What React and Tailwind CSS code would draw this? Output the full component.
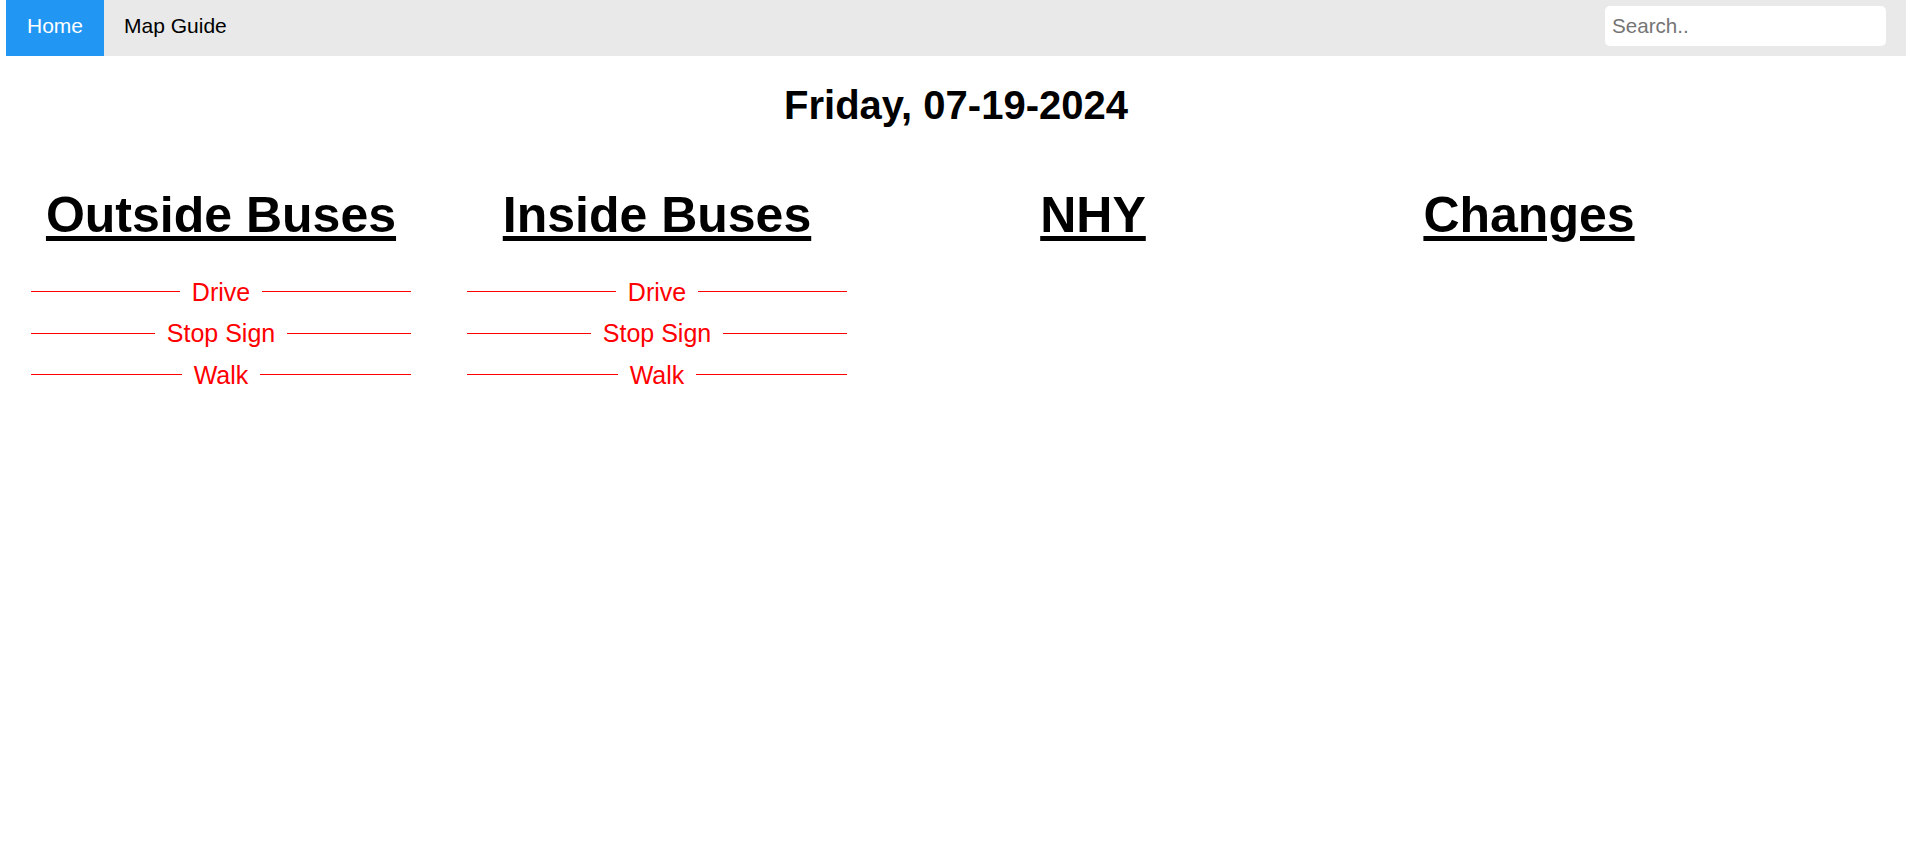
import React from "react";

function Divider({ label }) {
  return (
    <div className="flex items-center h-[28px] w-[380px]">
      <div className="flex-1 h-px bg-[#ff0000]" />
      <span className="mx-[12px] text-[25px] leading-[28px] text-[#ff0000]">{label}</span>
      <div className="flex-1 h-px bg-[#ff0000]" />
    </div>
  );
}

function Column({ title, width, dividers }) {
  return (
    <div className="flex flex-col items-center" style={{ width }}>
      <h2 className="text-[50px] font-bold leading-[57.5px] underline decoration-[5px] underline-offset-[4px] text-black">
        {title}
      </h2>
      {dividers && (
        <div className="flex flex-col gap-[13.5px] mt-[33px]">
          <Divider label="Drive" />
          <Divider label="Stop Sign" />
          <Divider label="Walk" />
        </div>
      )}
    </div>
  );
}

export default function App() {
  return (
    <div
      className="min-h-[847px] bg-white pl-[6px]"
      style={{ fontFamily: '"Liberation Sans", Arial, sans-serif' }}
    >
      <nav className="flex h-[56px] bg-[#e9e9e9] items-start">
        <a className="h-[56px] px-[21px] pt-[14px] bg-[#2196f3] text-white text-[21px] leading-[23.5px]">
          Home
        </a>
        <a className="h-[56px] px-[20px] pt-[14px] text-black text-[21px] leading-[23.5px]">
          Map Guide
        </a>
        <div className="flex-1" />
        <input
          type="text"
          placeholder="Search.."
          className="mt-[6px] mr-[20px] w-[281px] h-[40px] rounded-[5px] bg-white px-[7px] text-[20.6px] outline-none placeholder:text-[#757575]"
        />
      </nav>
      <h1 className="mt-[26px] text-center text-[40px] font-bold leading-[46px] text-black">
        Friday, 07-19-2024
      </h1>
      <div className="flex mt-[59px]">
        <Column title="Outside Buses" width={430} dividers />
        <Column title="Inside Buses" width={442} dividers />
        <Column title="NHY" width={430} />
        <Column title="Changes" width={442} />
      </div>
    </div>
  );
}
